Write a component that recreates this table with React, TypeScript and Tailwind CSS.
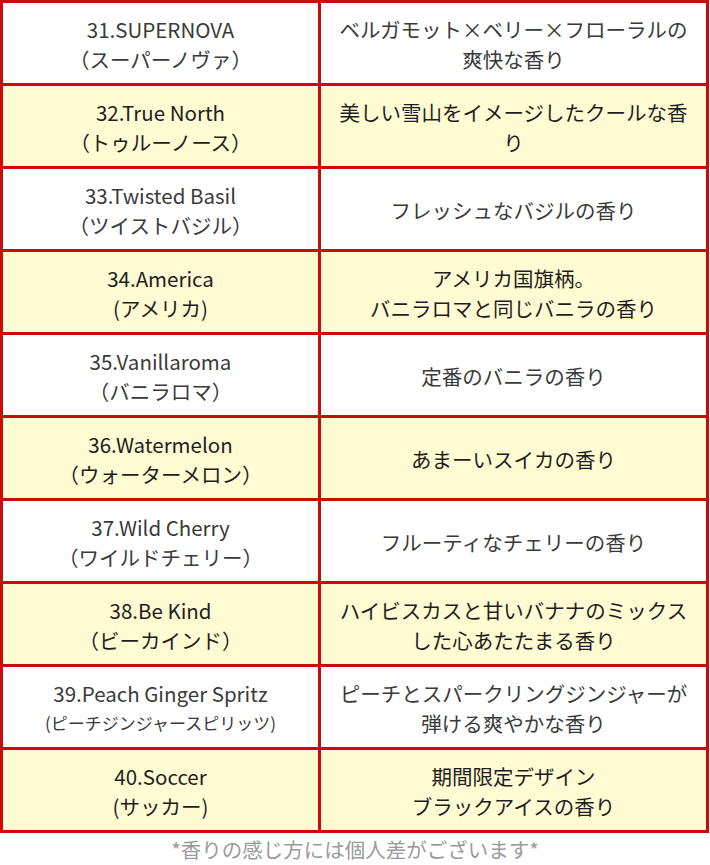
import React from "react";

type Row = { name: string; kana: string; desc: React.ReactNode; small?: boolean };

const rows: Row[] = [
  { name: "31.SUPERNOVA", kana: "（スーパーノヴァ）", desc: "ベルガモット×ベリー×フローラルの爽快な香り" },
  { name: "32.True North", kana: "（トゥルーノース）", desc: "美しい雪山をイメージしたクールな香り" },
  { name: "33.Twisted Basil", kana: "（ツイストバジル）", desc: "フレッシュなバジルの香り" },
  { name: "34.America", kana: "(アメリカ)", desc: (<>アメリカ国旗柄。<br />バニラロマと同じバニラの香り</>) },
  { name: "35.Vanillaroma", kana: "（バニラロマ）", desc: "定番のバニラの香り" },
  { name: "36.Watermelon", kana: "（ウォーターメロン）", desc: "あまーいスイカの香り" },
  { name: "37.Wild Cherry", kana: "（ワイルドチェリー）", desc: "フルーティなチェリーの香り" },
  { name: "38.Be Kind", kana: "（ビーカインド）", desc: "ハイビスカスと甘いバナナのミックスした心あたたまる香り" },
  { name: "39.Peach Ginger Spritz", kana: "(ピーチジンジャースピリッツ)", desc: (<>ピーチとスパークリングジンジャーが<br />弾ける爽やかな香り</>), small: true },
  { name: "40.Soccer", kana: "(サッカー)", desc: (<>期間限定デザイン<br />ブラックアイスの香り</>) },
];

export default function App() {
  return (
    <div
      className="w-[710px] h-[865px] bg-white overflow-hidden"
      style={{ fontFamily: '"Noto Sans CJK JP", "Noto Sans", sans-serif' }}
    >
      <table className="w-[709px] border-collapse table-fixed">
        <colgroup>
          <col className="w-[318px]" />
          <col />
        </colgroup>
        <tbody>
          {rows.map((r, i) => {
            const yellow = i % 2 === 1;
            const bg = yellow ? "bg-[#fffbd2] text-[#1e1e1e]" : "bg-white text-[#3a3a3a]";
            return (
              <tr key={i} className={`h-[83px] ${bg}`}>
                <td className="border-[3px] border-[#cc0a0a] text-center align-middle text-[20.5px] leading-[30px] px-2 pt-[2px]">
                  <div>{r.name}</div>
                  <div className={r.small ? "text-[17px]" : ""}>{r.kana}</div>
                </td>
                <td className="border-[3px] border-[#cc0a0a] text-center align-middle text-[20.5px] leading-[30px] px-[14px] pt-[2px]">
                  {r.desc}
                </td>
              </tr>
            );
          })}
        </tbody>
      </table>
      <div className="text-center text-[20.5px] leading-[30px] text-[#9a9a9a] mt-[1px]">
        *香りの感じ方には個人差がございます*
      </div>
    </div>
  );
}
